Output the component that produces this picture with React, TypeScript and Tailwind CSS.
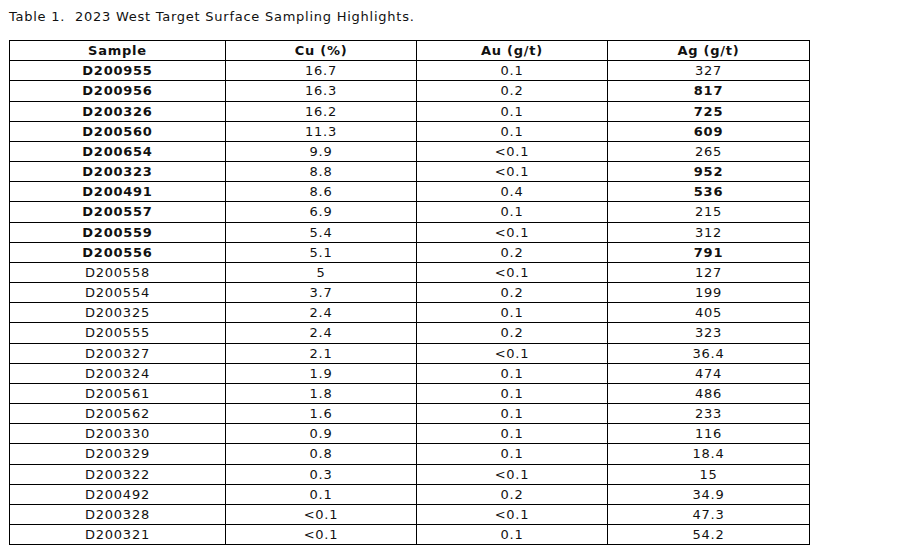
const rows: [string, string, string, string, boolean, boolean][] = [
  ['D200955', '16.7', '0.1', '327', true, false],
  ['D200956', '16.3', '0.2', '817', true, true],
  ['D200326', '16.2', '0.1', '725', true, true],
  ['D200560', '11.3', '0.1', '609', true, true],
  ['D200654', '9.9', '<0.1', '265', true, false],
  ['D200323', '8.8', '<0.1', '952', true, true],
  ['D200491', '8.6', '0.4', '536', true, true],
  ['D200557', '6.9', '0.1', '215', true, false],
  ['D200559', '5.4', '<0.1', '312', true, false],
  ['D200556', '5.1', '0.2', '791', true, true],
  ['D200558', '5', '<0.1', '127', false, false],
  ['D200554', '3.7', '0.2', '199', false, false],
  ['D200325', '2.4', '0.1', '405', false, false],
  ['D200555', '2.4', '0.2', '323', false, false],
  ['D200327', '2.1', '<0.1', '36.4', false, false],
  ['D200324', '1.9', '0.1', '474', false, false],
  ['D200561', '1.8', '0.1', '486', false, false],
  ['D200562', '1.6', '0.1', '233', false, false],
  ['D200330', '0.9', '0.1', '116', false, false],
  ['D200329', '0.8', '0.1', '18.4', false, false],
  ['D200322', '0.3', '<0.1', '15', false, false],
  ['D200492', '0.1', '0.2', '34.9', false, false],
  ['D200328', '<0.1', '<0.1', '47.3', false, false],
  ['D200321', '<0.1', '0.1', '54.2', false, false],
];

const cell = 'border border-black p-0 text-center leading-[19.17px]';

export default function App() {
  return (
    <div className="min-h-screen bg-white px-[9px] pt-[7px] text-[13px] tracking-[0.75px] text-[#111] font-['DejaVu_Sans',Verdana,sans-serif]">
      <p className="whitespace-pre leading-[20px]">Table 1.  2023 West Target Surface Sampling Highlights.</p>
      <table className="mt-[13px] w-[800px] border-collapse table-fixed">
        <colgroup>
          <col className="w-[216px]" />
          <col className="w-[191px]" />
          <col className="w-[191px]" />
          <col className="w-[202px]" />
        </colgroup>
        <thead>
          <tr>
            <th className={`${cell} font-bold`}>Sample</th>
            <th className={`${cell} font-bold`}>Cu (%)</th>
            <th className={`${cell} font-bold`}>Au (g/t)</th>
            <th className={`${cell} font-bold`}>Ag (g/t)</th>
          </tr>
        </thead>
        <tbody>
          {rows.map(([s, cu, au, ag, bs, ba]) => (
            <tr key={s}>
              <td className={`${cell} ${bs ? 'font-bold' : ''}`}>{s}</td>
              <td className={cell}>{cu}</td>
              <td className={cell}>{au}</td>
              <td className={`${cell} ${ba ? 'font-bold' : ''}`}>{ag}</td>
            </tr>
          ))}
        </tbody>
      </table>
    </div>
  );
}
